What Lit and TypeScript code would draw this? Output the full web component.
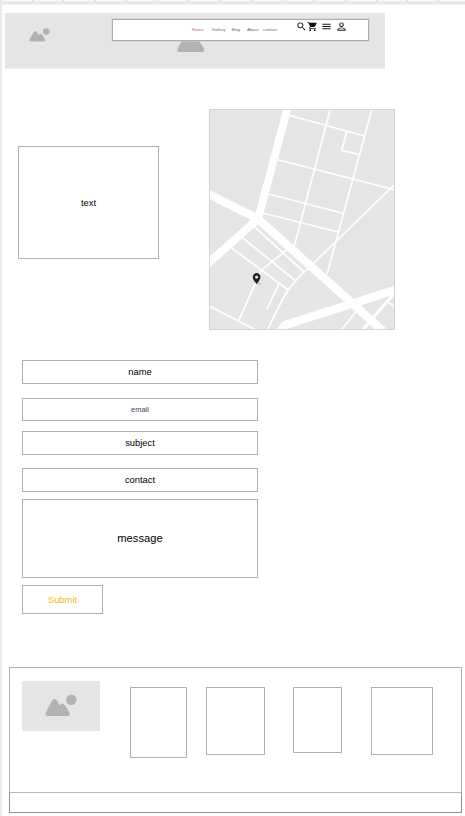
import { LitElement, html, css, svg } from "lit";
import { customElement, property } from "lit/decorators.js";

@customElement("placeholder-icon")
class PlaceholderIcon extends LitElement {
  static styles = css`
    :host { display: block; }
    svg { display: block; width: 100%; height: 100%; }
  `;
  render() {
    return html`<svg viewBox="0 0 32 23" preserveAspectRatio="none" fill="#b2b2b2">
      <circle cx="26.3" cy="5.7" r="5.2" />
      <path d="M0.9 18.2 L6.6 7.6 Q9.6 2.6 12.6 7.6 L14.8 11.6 Q17.3 7.6 20 11.2 L24.2 18 Q26.2 22 22.4 22 H3 Q-1 22 0.9 18.2Z" />
    </svg>`;
  }
}

@customElement("city-map")
class CityMap extends LitElement {
  static styles = css`
    :host { display: block; width: 186px; height: 221px; }
    svg { display: block; }
  `;
  render() {
    const minor = [
      "M290 115.5 L364.5 136",
      "M278 159.7 L395 190",
      "M268.7 194 L343 213.3",
      "M263 213 L338 232",
      "M330.3 109 L294.3 246",
      "M372 109 L327 274",
      "M346.7 132 L341.7 150.3 L359.3 154.3",
      "M395 184 L368.3 210 L308.3 268.3 Q296 279 288.3 290 Q281 301 267.5 330",
      "M254.3 226.7 L304 272",
      "M242.7 238 L295 280.3",
      "M231.7 248 L288.3 290",
      "M287.3 249.3 L261 270.7 L239 320",
      "M279 283.7 L267 309",
      "M209 306 L256 330",
      "M356.5 311 L341.5 330",
      "M388.3 302.3 L395 307.3",
    ];
    return html`<svg width="186" height="221" viewBox="209 109 186 221">
      <rect x="209" y="109" width="186" height="221" fill="#e5e5e5" />
      <g fill="none" stroke="#fff">
        <g stroke-width="1.7">${minor.map((d) => svg`<path d=${d} />`)}</g>
        <path stroke-width="3" d="M395 292.5 L362.5 330" />
        <path stroke-width="7.8" d="M287.8 107 L258 219" />
        <path stroke-width="8.3" d="M205 192.3 L257.5 218.5 L352.3 303.3 L383 331" />
        <path stroke-width="8" d="M259 218 L206 265.3" />
        <path stroke-width="8.3" stroke-linejoin="round" d="M399 288.5 L352 303.8 L285 325 L279 333" />
      </g>
      <rect x="209.5" y="109.5" width="185" height="220" fill="none" stroke="#d4d4d4" />
      <path transform="translate(250 272) scale(.55)" fill="#222" fill-rule="evenodd"
        d="M12 2C8.13 2 5 5.13 5 9c0 5.25 7 13 7 13s7-7.75 7-13c0-3.87-3.13-7-7-7zm0 9.8a2.8 2.8 0 1 1 0-5.6 2.8 2.8 0 0 1 0 5.6z" />
      <path d="M258 284 h3" stroke="#aaa" stroke-width="1" />
    </svg>`;
  }
}

@customElement("nav-bar")
class NavBar extends LitElement {
  static styles = css`
    :host {
      display: flex; box-sizing: border-box; width: 257px; height: 22px;
      border: 1px solid #acacac; background: #fff;
      font: 4.4px/6px "Liberation Sans", Arial, sans-serif;
      box-shadow: 0 0 0 0.5px #cfcfcf;
    }
    .links { display: flex; width: 104px; padding: 7px 0 0 79px; color: #666b7c; }
    .link { flex: none; }
    .home { width: 19.5px; color: #e0605d; }
    .gallery { width: 20px; }
    .blog { width: 15.5px; }
    .about { width: 16px; }
    .icons { display: flex; padding-top: 1px; }
    svg { display: block; width: 11px; height: 11px; flex: none; fill: #111; }
    .menu { margin-left: 3px; }
    .user { margin-left: 4px; }
  `;
  render() {
    return html`
      <div class="links">
        <span class="link home">Home</span><span class="link gallery">Gallery</span><span class="link blog">Blog</span><span class="link about">About</span><span class="link">contact</span>
      </div>
      <div class="icons">
        <svg viewBox="0 0 24 24"><path d="M15.5 14h-.79l-.28-.27A6.47 6.47 0 0 0 16 9.5 6.5 6.5 0 1 0 9.5 16c1.61 0 3.09-.59 4.23-1.57l.27.28v.79l5 4.99L20.49 19l-4.99-5zm-6 0C7.01 14 5 11.99 5 9.5S7.01 5 9.5 5 14 7.01 14 9.5 11.99 14 9.5 14z" /></svg>
        <svg viewBox="0 0 24 24"><path d="M7 18c-1.1 0-2 .9-2 2s.9 2 2 2 2-.9 2-2-.9-2-2-2zM1 2v2h2l3.6 7.59-1.35 2.45C4.52 15.37 5.48 17 7 17h12v-2H7.42c-.14 0-.25-.11-.25-.25L8.1 13h7.45c.75 0 1.41-.41 1.75-1.03L20.88 5.5C21.25 4.82 20.76 4 20 4H5.21l-.94-2H1zm16 16c-1.1 0-2 .9-2 2s.9 2 2 2 2-.9 2-2-.9-2-2-2z" /></svg>
        <svg class="menu" viewBox="0 0 24 24"><path d="M3 18h18v-2H3v2zm0-5h18v-2H3v2zm0-7v2h18V6H3z" /></svg>
        <svg class="user" viewBox="0 0 24 24"><path d="M12 3a5 5 0 1 0 0 10 5 5 0 0 0 0-10zm0 2.1a2.9 2.9 0 1 1 0 5.8 2.9 2.9 0 0 1 0-5.8zM12 14c-3 0-9 1.500-9 4.500V21h18v-2.500c0-3-6-4.500-9-4.500zm0 2c3 0 7 1.500 7 2.500V19H5v-.5c0-1 4-2.500 7-2.500z" /></svg>
      </div>`;
  }
}

@customElement("wire-box")
class WireBox extends LitElement {
  @property() label = "";
  static styles = css`
    :host {
      display: flex; align-items: center; justify-content: center; box-sizing: border-box;
      flex: none; border: 1px solid #b0b0b0; background: #fff; color: #000;
      font-family: "Liberation Sans", Arial, sans-serif; font-size: 9.4px; line-height: 12px;
    }
  `;
  render() {
    return html`<span>${this.label}</span>`;
  }
}

@customElement("app-root")
class AppRoot extends LitElement {
  static styles = css`
    :host {
      display: flex; flex-direction: column; box-sizing: border-box; width: 465px; height: 816px;
      overflow: hidden; background: #fff; border-left: 2px solid #e8eaee;
    }
    .strip { flex: none; height: 5px; box-sizing: border-box; margin-left: -2px; display: flex; gap: 30.25px; padding-left: 32px;
      background: linear-gradient(#fafafa 0 1px, #e7e9f0 1px 4px, #f4f5f8 4px); }
    .tick { flex: none; width: 1px; height: 1px; background: #d2d3da; }
    .banner { position: relative; flex: none; margin: 8px 0 0 3px; width: 380px; height: 55px; background: #e5e5e5; border-bottom: 1px solid #efefef; }
    .logo { padding: 15px 0 0 24px; width: 21px; height: 14px; }
    .logo placeholder-icon { height: 14px; }
    .peak { position: absolute; left: 172px; top: 16px; width: 35px; height: 24px; }
    nav-bar { position: absolute; left: 107px; top: 6px; }
    .hero { display: flex; flex: none; align-items: flex-start; margin: 40px 0 0 16px; }
    .about { width: 141px; height: 113px; margin: 37px 50px 0 0; }
    form { display: flex; flex: none; flex-direction: column; align-items: flex-start; margin: 30px 0 0 20px; }
    .field { width: 236px; height: 24px; }
    .name { margin-bottom: 14px; }
    .email { height: 23px; margin-bottom: 10px; font-size: 7.5px; color: #3a3f66; }
    .subject { margin-bottom: 13px; }
    .contact { margin-bottom: 7px; }
    .message { height: 79px; margin-bottom: 7px; padding-bottom: 1px; font-size: 11.2px; }
    .submit { width: 81px; height: 29px; color: #f0b90f; }
    footer { flex: none; box-sizing: border-box; width: 453px; height: 146px; margin: 53px 0 0 7px;
      border: 1px solid #b0b0b0; display: flex; flex-direction: column; }
    .columns { display: flex; align-items: flex-start; height: 124px; }
    .thumb { box-sizing: border-box; width: 78px; height: 50px; margin: 13px 30px 0 12px; padding: 13px 0 0 23px; background: #e5e5e5; }
    .thumb placeholder-icon { width: 32px; height: 23px; }
    .c1 { width: 57px; height: 71px; margin: 19px 19px 0 0; }
    .c2 { width: 59px; height: 68px; margin: 19px 28px 0 0; }
    .c3 { width: 49px; height: 66px; margin: 19px 29px 0 0; }
    .c4 { width: 62px; height: 68px; margin-top: 19px; }
    .bar { height: 21px; margin: 0 -1px -1px; border: 1px solid #919191; border-top-color: #b8b8b8; box-sizing: border-box; }
  `;
  render() {
    return html`
      <div class="strip">${Array.from({ length: 14 }, () => html`<span class="tick"></span>`)}</div>
      <header class="banner">
        <div class="logo"><placeholder-icon></placeholder-icon></div>
        <placeholder-icon class="peak"></placeholder-icon>
        <nav-bar></nav-bar>
      </header>
      <section class="hero">
        <wire-box class="about" label="text"></wire-box>
        <city-map></city-map>
      </section>
      <form>
        <wire-box class="field name" label="name"></wire-box>
        <wire-box class="field email" label="email"></wire-box>
        <wire-box class="field subject" label="subject"></wire-box>
        <wire-box class="field contact" label="contact"></wire-box>
        <wire-box class="field message" label="message"></wire-box>
        <wire-box class="submit" label="Submit"></wire-box>
      </form>
      <footer>
        <div class="columns">
          <div class="thumb"><placeholder-icon></placeholder-icon></div>
          <wire-box class="c1"></wire-box>
          <wire-box class="c2"></wire-box>
          <wire-box class="c3"></wire-box>
          <wire-box class="c4"></wire-box>
        </div>
        <div class="bar"></div>
      </footer>`;
  }
}
